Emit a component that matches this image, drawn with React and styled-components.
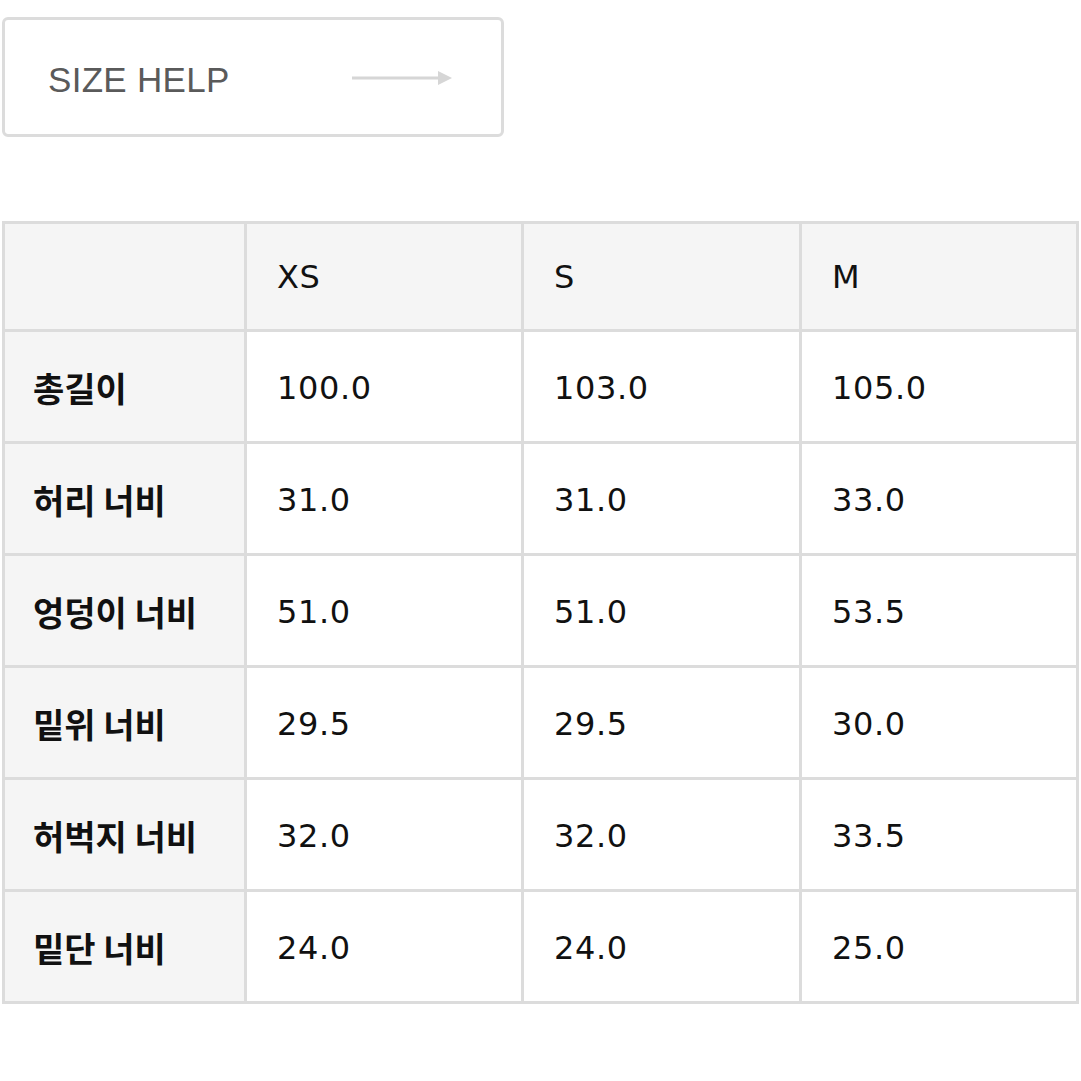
import React from "react";
import styled, { createGlobalStyle } from "styled-components";

const Global = createGlobalStyle`
  html, body { margin: 0; padding: 0; background: #ffffff; }
  * { box-sizing: border-box; }
`;

const Page = styled.div`
  padding: 17px 0 0 2px;
  font-family: "Noto Sans CJK KR", "Noto Sans", sans-serif;
`;

const HelpButton = styled.button`
  display: flex;
  align-items: center;
  justify-content: space-between;
  width: 502px;
  height: 120px;
  padding: 0 49px 0 43px;
  background: #ffffff;
  border: 3px solid #dcdcdc;
  border-radius: 6px;
  cursor: pointer;
`;

const HelpLabel = styled.span`
  font-family: "Liberation Sans", Arial, sans-serif;
  font-size: 35px;
  color: #5a5a5a;
  letter-spacing: 0.3px;
  margin-top: 5px;
`;

const ArrowSvg = styled.svg`
  display: block;
  width: 100px;
  height: 20px;
  margin-top: 2px;
`;

const Arrow = () => (
  <ArrowSvg viewBox="0 0 100 20" aria-hidden="true">
    <line x1="0" y1="10" x2="88" y2="10" stroke="#d6d6d6" strokeWidth="3" />
    <polygon points="86,3 100,10 86,17" fill="#d6d6d6" />
  </ArrowSvg>
);

const Table = styled.table`
  margin-top: 84px;
  width: 1077px;
  table-layout: fixed;
  border-collapse: separate;
  border-spacing: 0;
  border-top: 3px solid #dcdcdc;
  border-left: 3px solid #dcdcdc;
`;

const Col = styled.col`
  width: ${(p) => p.$w}px;
`;

const Cell = styled.td`
  box-sizing: border-box;
  height: ${(p) => (p.$head ? 108 : 112)}px;
  padding: ${(p) => (p.$head ? 0 : 2)}px 0 0 ${(p) => (p.$label ? 28 : 30)}px;
  border-right: 3px solid #dcdcdc;
  border-bottom: 3px solid #dcdcdc;
  background: ${(p) => (p.$shade ? "#f5f5f5" : "#ffffff")};
  vertical-align: middle;
  text-align: left;
  color: #111111;
  font-family: ${(p) =>
    p.$label
      ? '"Noto Sans CJK KR", "Noto Sans", sans-serif'
      : '"DejaVu Sans", "Noto Sans", sans-serif'};
  font-size: ${(p) => (p.$label ? 34 : 32)}px;
  font-weight: ${(p) => (p.$label ? 700 : 400)};
  letter-spacing: ${(p) => (p.$label ? "0px" : "0.6px")};
  line-height: 1;
`;

const colWidths = [242, 277, 278, 277];
const sizes = ["XS", "S", "M"];
const rows = [
  ["총길이", "100.0", "103.0", "105.0"],
  ["허리 너비", "31.0", "31.0", "33.0"],
  ["엉덩이 너비", "51.0", "51.0", "53.5"],
  ["밑위 너비", "29.5", "29.5", "30.0"],
  ["허벅지 너비", "32.0", "32.0", "33.5"],
  ["밑단 너비", "24.0", "24.0", "25.0"],
];

export default function App() {
  return (
    <Page>
      <Global />
      <HelpButton type="button">
        <HelpLabel>SIZE HELP</HelpLabel>
        <Arrow />
      </HelpButton>
      <Table>
        <colgroup>
          {colWidths.map((w, i) => (
            <Col key={i} $w={w} />
          ))}
        </colgroup>
        <thead>
          <tr>
            <Cell as="th" $head $shade />
            {sizes.map((s) => (
              <Cell as="th" key={s} $head $shade>
                {s}
              </Cell>
            ))}
          </tr>
        </thead>
        <tbody>
          {rows.map(([label, ...vals]) => (
            <tr key={label}>
              <Cell as="th" $label $shade>
                {label}
              </Cell>
              {vals.map((v, i) => (
                <Cell key={i}>{v}</Cell>
              ))}
            </tr>
          ))}
        </tbody>
      </Table>
    </Page>
  );
}
